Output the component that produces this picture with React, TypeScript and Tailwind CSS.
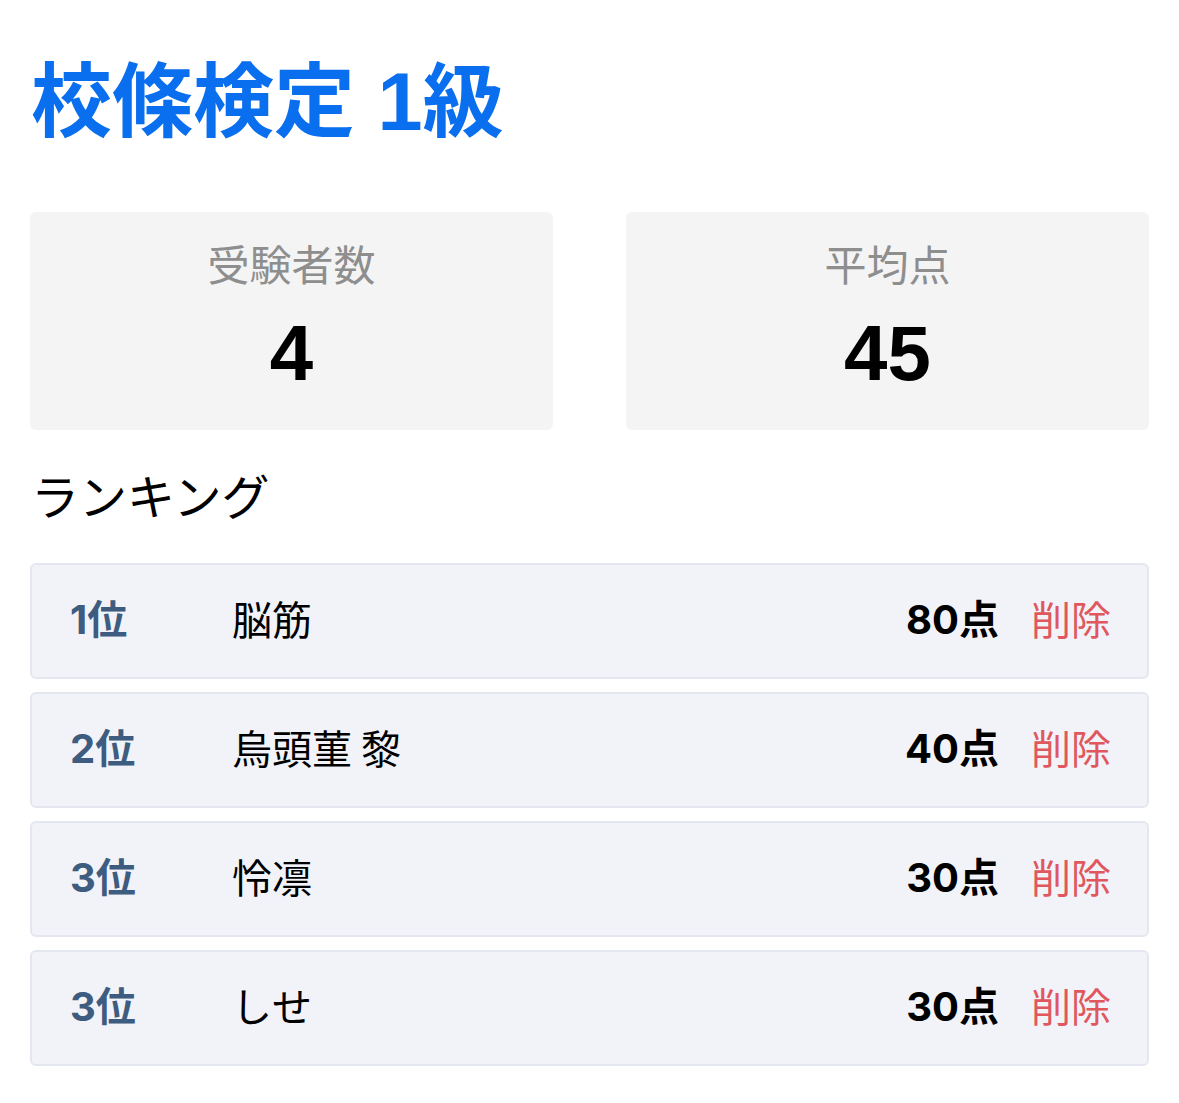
import React from "react";

const rows = [
  { rank: "1", name: "脳筋", score: "80" },
  { rank: "2", name: "烏頭菫 黎", score: "40" },
  { rank: "3", name: "怜凛", score: "30" },
  { rank: "3", name: "しせ", score: "30" },
];

export default function App() {
  return (
    <div
      className="min-h-[1103px] bg-white px-[30px] pt-[57px]"
      style={{ fontFamily: '"Liberation Sans", "Noto Sans CJK JP", sans-serif' }}
    >
      <h1 className="text-[81px] leading-[90px] font-bold text-[#0a6fee] pl-[1px]">校條検定 1級</h1>
      <div className="mt-[65px] grid grid-cols-2 gap-[73px]">
        {[
          { label: "受験者数", value: "4" },
          { label: "平均点", value: "45" },
        ].map((c) => (
          <div key={c.label} className="h-[218px] rounded-[6px] bg-[#f4f4f4] flex flex-col items-center pt-[27px]">
            <div className="text-[42px] leading-[48px] text-[#8e8e8e]" style={{ fontFamily: '"Noto Sans CJK JP", sans-serif' }}>{c.label}</div>
            <div className="mt-[27px] text-[78px] leading-[78px] font-bold text-black">{c.value}</div>
          </div>
        ))}
      </div>
      <h2 className="mt-[36px] text-[48px] leading-[56px] text-black pl-[1px]" style={{ fontFamily: '"Noto Sans CJK JP", sans-serif' }}>ランキング</h2>
      <div className="mt-[41px] flex flex-col gap-[13px]" style={{ fontFamily: '"Noto Sans CJK JP", sans-serif' }}>
        {rows.map((r, i) => (
          <div key={i} className="h-[116px] rounded-[6px] border-2 border-[#e4e7ef] bg-[#f1f3f8] flex items-center pl-[38px] pr-[36px] pb-[6px]">
            <div className="w-[162px] text-[40px] leading-[48px] font-bold text-[#3e5c80]">
              <span style={{ fontFamily: 'Inter, "Noto Sans CJK JP", sans-serif' }}>{r.rank}</span>位
            </div>
            <div className="flex-1 text-[40px] leading-[48px] text-black">{r.name}</div>
            <div className="text-[40px] leading-[48px] font-bold text-black">
              <span style={{ fontFamily: 'Inter, "Noto Sans CJK JP", sans-serif' }}>{r.score}</span>点
            </div>
            <div className="ml-[32px] text-[40px] leading-[48px] text-[#e0585e]">削除</div>
          </div>
        ))}
      </div>
    </div>
  );
}
